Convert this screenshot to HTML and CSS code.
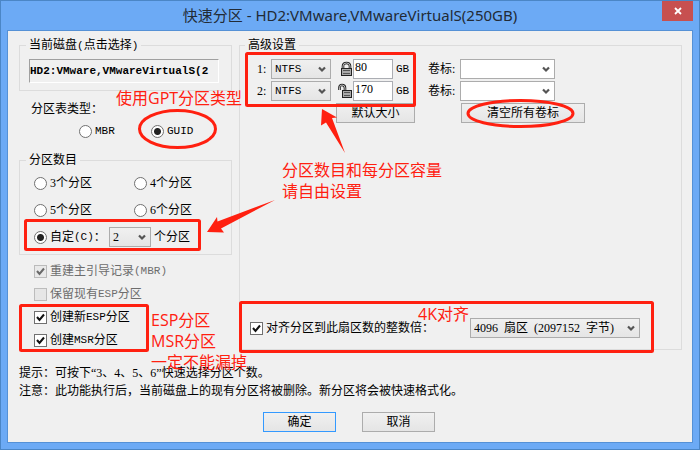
FILE: index.html
```html
<!DOCTYPE html>
<html lang="zh-CN">
<head>
    <meta charset="UTF-8">
    <meta name="viewport" content="width=device-width, initial-scale=1.0">
    <title>快速分区</title>
    <link rel="stylesheet" href="styles.css">
</head>
<body>

    <div class="window">
        <header class="titlebar">
            <h1>快速分区 - HD2:VMware,VMwareVirtualS(250GB)</h1>
            <button class="close-btn" type="button" aria-label="关闭">
                <svg width="8" height="8" viewBox="0 0 8 8"><path d="M1 1L7 7M7 1L1 7" stroke="#fff" stroke-width="1.8"/></svg>
            </button>
        </header>

        <form class="client">
            <div class="columns">
                <div class="left">
                    <fieldset>
                        <legend>当前磁盘<span class="en">(</span>点击选择<span class="en">)</span></legend>
                        <input class="disk" type="text" value="HD2:VMware,VMwareVirtualS(2" aria-label="当前磁盘" readonly>
                    </fieldset>

                    <div class="table-type">
                        <p>分区表类型：</p>
                        <div class="type-row">
                            <label><input type="radio" name="type"><span class="en">MBR</span></label>
                            <label><input type="radio" name="type" checked><span class="en">GUID</span></label>
                        </div>
                    </div>

                    <fieldset>
                        <legend>分区数目</legend>
                        <div class="counts">
                            <label><input type="radio" name="count">3个分区</label>
                            <label><input type="radio" name="count">4个分区</label>
                            <label><input type="radio" name="count">5个分区</label>
                            <label><input type="radio" name="count">6个分区</label>
                            <div class="custom">
                                <label><input type="radio" name="count" checked>自定<span class="en">(C)</span>：</label>
                                <select class="count-select" id="customCount"><option>2</option></select>
                                <label for="customCount">个分区</label>
                            </div>
                        </div>
                    </fieldset>

                    <div class="options">
                        <label class="disabled"><input type="checkbox" checked disabled>重建主引导记录<span class="en">(MBR)</span></label>
                        <label class="disabled"><input type="checkbox" disabled>保留现有<span class="en">ESP</span>分区</label>
                        <label><input type="checkbox" checked>创建新<span class="en">ESP</span>分区</label>
                        <label><input type="checkbox" checked>创建<span class="en">MSR</span>分区</label>
                    </div>
                </div>

                <fieldset class="advanced">
                    <legend>高级设置</legend>
                    <div class="partitions">
                        <div class="part-row">
                            <label for="fs1">1:</label>
                            <select class="en" id="fs1"><option>NTFS</option></select>
                            <svg class="lock" width="14" height="16" viewBox="0 0 14 16">
                                <path d="M4 8V5Q4 2 7.500 2Q11 2 11 5V8" fill="none" stroke="#222" stroke-width="2.600"/>
                                <path d="M4 8V5Q4 2 7.500 2Q11 2 11 5V8" fill="none" stroke="#ddd" stroke-width=".8"/>
                                <rect x="2.500" y="7.500" width="10" height="7" fill="#aaa" stroke="#222"/>
                                <path d="M4 9.500H11M4 12.500H11" stroke="#555"/>
                            </svg>
                            <input class="size" id="size1" type="text" value="80">
                            <label class="en" for="size1">GB</label>
                            <label for="vol1">卷标:</label>
                            <select class="volume" id="vol1"><option></option></select>
                        </div>
                        <div class="part-row">
                            <label for="fs2">2:</label>
                            <select class="en" id="fs2"><option>NTFS</option></select>
                            <svg class="lock" width="16" height="16" viewBox="0 0 16 16">
                                <path d="M2.500 7V4.500Q2.500 2 5 2Q8 2 8 5V8" fill="none" stroke="#222" stroke-width="2.600"/>
                                <path d="M2.500 7V4.500Q2.500 2 5 2Q8 2 8 5V8" fill="none" stroke="#ddd" stroke-width=".8"/>
                                <rect x="5.500" y="7.500" width="9" height="7" fill="#aaa" stroke="#222"/>
                                <path d="M7 9.500H13M7 12.500H13" stroke="#555"/>
                            </svg>
                            <input class="size" id="size2" type="text" value="170">
                            <label class="en" for="size2">GB</label>
                            <label for="vol2">卷标:</label>
                            <select class="volume" id="vol2"><option></option></select>
                        </div>
                        <div class="part-buttons">
                            <button class="btn default-size" type="button">默认大小</button>
                            <button class="btn clear-volumes" type="button">清空所有卷标</button>
                        </div>
                    </div>
                    <div class="align-row">
                        <label><input type="checkbox" checked>对齐分区到此扇区数的整数倍：</label>
                        <select class="sectors" aria-label="扇区数"><option>4096&nbsp; 扇区&nbsp; (2097152&nbsp; 字节)</option></select>
                    </div>
                </fieldset>
            </div>

            <div class="hints">
                <p>提示：可按下“3、4、5、6”快速选择分区个数。</p>
                <p>注意：此功能执行后，当前磁盘上的现有分区将被删除。新分区将会被快速格式化。</p>
            </div>

            <div class="actions">
                <button class="btn primary" type="button">确定</button>
                <button class="btn" type="button">取消</button>
            </div>
        </form>

        <!-- red marks over the dialog -->
        <svg class="marks" width="700" height="450" viewBox="0 0 700 450" aria-hidden="true">
            <g fill="none" stroke="#ff2010" stroke-width="3">
                <rect x="246.500" y="53.500" width="168" height="52" rx="1"/>
                <rect x="25.500" y="220.500" width="174" height="29" rx="1"/>
                <rect x="20.500" y="305.500" width="127" height="45" rx="1"/>
                <rect x="240.500" y="302.500" width="412" height="49" rx="1"/>
                <ellipse cx="177.500" cy="129" rx="38" ry="18.500"/>
                <ellipse cx="520.500" cy="113.500" rx="52.500" ry="13"/>
            </g>
            <path d="M322 109L337 117.500L332 118L345 153L326 122.500L321 125.500Z" fill="#ff2010"/>
            <path d="M207 232L217 217L217.500 221.500L275 200L221 228.500L224 232.500Z" fill="#ff2010"/>
        </svg>
        <p class="note note-gpt">使用GPT分区类型</p>
        <p class="note note-size">分区数目和每分区容量<br>请自由设置</p>
        <p class="note note-esp">ESP分区<br>MSR分区<br>一定不能漏掉</p>
        <p class="note note-align">4K对齐</p>
    </div>

</body>
</html>
```
FILE: styles.css
```css
* {
    box-sizing: border-box;
}

body {
    margin: 0;
    font-family: 'Liberation Serif', 'Noto Sans CJK SC', serif;
    font-size: 12px;
    line-height: 16px;
    color: #000;
}

p, h1 {
    margin: 0;
}

.window {
    position: relative;
    display: flex;
    flex-direction: column;
    min-height: 100vh;
    padding: 0 6px 6px;
    background: #6caaf5;
    border: 1px solid #4b86c6;
}

.titlebar {
    display: flex;
    justify-content: center;
    height: 29px;
}

.titlebar h1 {
    font-family: 'Noto Sans', 'Noto Sans CJK SC', sans-serif;
    font-size: 15px;
    font-weight: 400;
    line-height: 28px;
    color: #222b36;
}

.close-btn {
    position: absolute;
    top: 0;
    right: 6px;
    width: 31px;
    height: 20px;
    padding: 0;
    border: none;
    background: #c75050;
}

.client {
    flex: 1;
    padding: 6px 10px 10px 11px;
    background: #f0f0f0;
    border: 1px solid #5591d6;
}

.columns {
    display: grid;
    grid-template-columns: 213px 1fr;
    gap: 7px;
}

fieldset {
    margin: 0;
    padding: 5px 12px 7px 9px;
    border: 1px solid #dcdcdc;
    min-width: 0;
}

legend {
    margin-left: -3px;
    padding: 0 3px;
}

label {
    display: flex;
    align-items: center;
    white-space: nowrap;
}

.en {
    font-family: 'Liberation Mono', monospace;
    font-size: 11px;
}

input, select, button {
    margin: 0;
    font-family: inherit;
    font-size: 12px;
    color: #000;
}

input[type="radio"], input[type="checkbox"] {
    appearance: none;
    flex: none;
    width: 13px;
    height: 13px;
    margin-right: 3px;
    border: 1px solid #707070;
    background: #fff;
}

input[type="radio"] {
    border-radius: 50%;
}

input[type="radio"]:checked {
    background: radial-gradient(circle, #222 3px, #fff 4px);
}

input[type="checkbox"]:checked {
    background: #fff url("data:image/svg+xml,%3Csvg xmlns='http://www.w3.org/2000/svg' width='11' height='11'%3E%3Cpath d='M2 5L4.500 8L9 2.500' fill='none' stroke='%23111' stroke-width='2'/%3E%3C/svg%3E");
}

.disabled {
    color: #6d6d6d;
}

.disabled input[type="checkbox"] {
    border-color: #bcbcbc;
    background-color: #e6e6e6;
}

.disabled input[type="checkbox"]:checked {
    opacity: 0.6;
    border-color: #999;
}

select {
    appearance: none;
    height: 20px;
    padding: 0 18px 0 3px;
    border: 1px solid #acacac;
    border-radius: 0;
    background: url("data:image/svg+xml,%3Csvg xmlns='http://www.w3.org/2000/svg' width='8' height='7'%3E%3Cpath d='M1 1.500L4 4.500L7 1.500' fill='none' stroke='%23555' stroke-width='2.200'/%3E%3C/svg%3E") no-repeat right 4px center, linear-gradient(#f0f0f0, #e5e5e5);
}

select.en {
    font-family: 'Liberation Mono', monospace;
    font-size: 11px;
}

.disk {
    display: block;
    width: 100%;
    height: 24px;
    padding: 0;
    border: 1px solid;
    border-color: #a0a0a0 #fff #fff #a0a0a0;
    background: #f0f0f0;
    font-family: 'Liberation Mono', monospace;
    font-size: 11px;
    font-weight: 700;
}

.table-type {
    padding: 10px 0 13px 12px;
}

.type-row {
    display: grid;
    grid-template-columns: 72px 1fr;
    padding: 6px 0 0 48px;
}

.counts {
    display: grid;
    grid-template-columns: 100px 1fr;
    grid-auto-rows: 20px;
    row-gap: 7px;
    padding-left: 5px;
}

.custom {
    grid-column: 1 / 3;
    display: grid;
    grid-template-columns: 75px 42px 1fr;
    align-items: center;
}

.custom label:last-child {
    padding-left: 3px;
}

.options {
    display: grid;
    row-gap: 7px;
    padding: 8px 0 2px 15px;
}

.advanced {
    display: flex;
    flex-direction: column;
    justify-content: space-between;
    padding: 6px 10px 11px;
}

.advanced legend {
    margin-left: -5px;
}

.partitions {
    display: grid;
    row-gap: 2px;
    padding-left: 7px;
}

.part-row {
    display: grid;
    grid-template-columns: 14px 60px 22px 40px 35px 32px 95px;
    align-items: center;
}

.part-row label.en {
    padding-left: 3px;
}

.lock {
    justify-self: end;
}

.size {
    width: 100%;
    height: 20px;
    padding: 0 1px 3px;
    border: 1px solid #abadb3;
    background: #fff;
}

.volume {
    background-color: #fff;
    background-image: url("data:image/svg+xml,%3Csvg xmlns='http://www.w3.org/2000/svg' width='8' height='7'%3E%3Cpath d='M1 1.500L4 4.500L7 1.500' fill='none' stroke='%23555' stroke-width='2.200'/%3E%3C/svg%3E");
}

.part-buttons {
    display: flex;
    gap: 46px;
    padding-left: 79px;
}

.btn {
    width: 73px;
    height: 20px;
    padding: 0;
    line-height: 16px;
    border: 1px solid #acacac;
    background: linear-gradient(#f0f0f0, #e5e5e5);
}

.default-size {
    width: 79px;
}

.clear-volumes {
    width: 124px;
}

.primary {
    border-color: #3399ff;
}

.align-row {
    display: flex;
    gap: 36px;
}

.sectors {
    width: 170px;
}

.hints {
    padding-top: 14px;
    line-height: 18px;
}

.actions {
    display: flex;
    justify-content: center;
    gap: 26px;
    padding: 12px 3px 0 0;
}

.marks {
    position: absolute;
    top: -1px;
    left: -1px;
    pointer-events: none;
}

.note {
    position: absolute;
    font-family: 'Open Sans', 'Noto Sans CJK SC', sans-serif;
    font-size: 16px;
    line-height: 21px;
    color: #ff2010;
    white-space: nowrap;
    pointer-events: none;
}

.note-gpt {
    top: 87px;
    left: 115px;
}

.note-size {
    top: 159px;
    left: 281px;
}

.note-esp {
    top: 309px;
    left: 150px;
}

.note-align {
    top: 303px;
    left: 417px;
}
```
